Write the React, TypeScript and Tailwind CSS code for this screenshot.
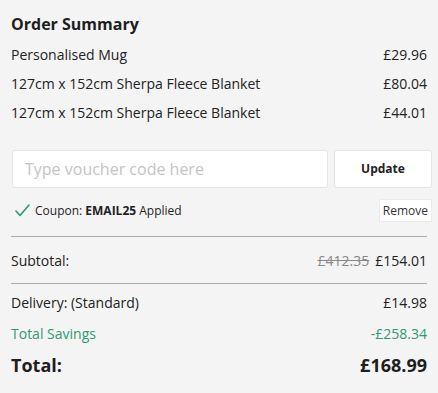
import React, { useState } from 'react';

type LineItem = { name: string; price: string };

const ITEMS: LineItem[] = [
  { name: 'Personalised Mug', price: '£29.96' },
  { name: '127cm x 152cm Sherpa Fleece Blanket', price: '£80.04' },
  { name: '127cm x 152cm Sherpa Fleece Blanket', price: '£44.01' },
];

const CheckIcon = () => (
  <svg width="15" height="13" viewBox="0 0 15 13" fill="none">
    <path d="M1 7l4 4.5L14 1" stroke="#2e9a72" strokeWidth="1.6" strokeLinecap="round" strokeLinejoin="round" />
  </svg>
);

const App = () => {
  const [voucher, setVoucher] = useState('');

  return (
    <div className="w-[438px] h-[393px] bg-[#f4f4f4] text-[#222] font-['Open_Sans',sans-serif] pl-[11px] pr-[11px] pt-[10px]">
      {/* 헤더 */}
      <h2 className="text-[16px] font-bold leading-[26px] text-[#1e1e1e] mt-[1px] -mb-[1px]">Order Summary</h2>

      {/* 상품 목록 */}
      <div className="flex flex-col mt-[4px]">
        {ITEMS.map((item, i) => (
          <div key={i} className="flex justify-between items-center h-[29px] text-[14px]">
            <span>{item.name}</span>
            <span>{item.price}</span>
          </div>
        ))}
      </div>

      {/* 바우처 */}
      <div className="flex gap-[6px] mt-[23px] -mr-[5px] pl-px">
        <input
          value={voucher}
          onChange={(e) => setVoucher(e.target.value)}
          placeholder="Type voucher code here"
          className="w-[316px] h-[38px] bg-white rounded-[3px] border border-[#e4e4e4] px-[12px] text-[16px] placeholder:text-[#c4c4c4] outline-none"
        />
        <button className="flex-1 h-[38px] bg-white rounded-[3px] border border-[#e4e4e4] text-[12px] font-bold text-[#222]">
          Update
        </button>
      </div>

      <div className="flex justify-between items-center mt-[11px] -mr-[5px]">
        <div className="flex items-center gap-[5px] pl-[4px] text-[12px]">
          <CheckIcon />
          <span>
            Coupon: <b>EMAIL25</b> Applied
          </span>
        </div>
        <button className="bg-white border border-[#ebebeb] px-[3px] h-[23px] text-[12px] text-[#333]">Remove</button>
      </div>

      <div className="border-t border-[#aaa] mt-[14px]" />

      {/* 합계 */}
      <div className="flex justify-between items-center h-[46px] text-[14px]">
        <span>Subtotal:</span>
        <span>
          <s className="text-[#888] mr-[6px]">£412.35</s>£154.01
        </span>
      </div>
      <div className="border-t border-[#aaa]" />

      <div className="flex justify-between items-center h-[35px] text-[14px] mt-[1px]">
        <span>Delivery: (Standard)</span>
        <span>£14.98</span>
      </div>
      <div className="flex justify-between items-center h-[26px] text-[14px] text-[#2e9a72]">
        <span>Total Savings</span>
        <span>-£258.34</span>
      </div>
      <div className="flex justify-between items-center h-[38px] text-[18px] font-bold text-[#1e1e1e]">
        <span>Total:</span>
        <span>£168.99</span>
      </div>
    </div>
  );
};

export default App;
